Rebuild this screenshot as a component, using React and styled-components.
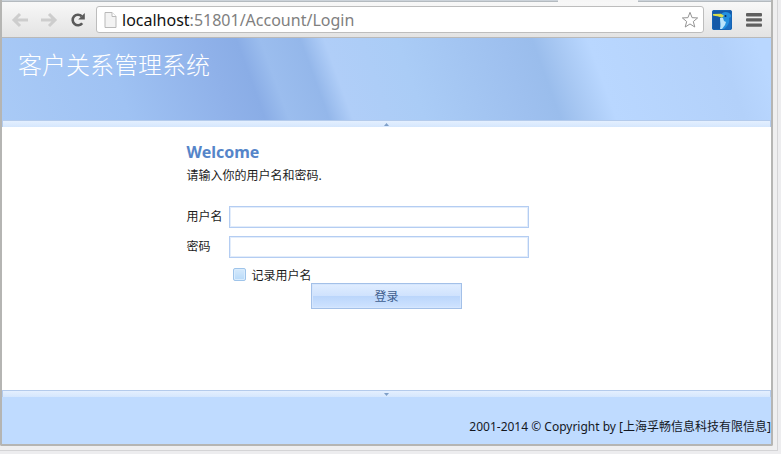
import React from "react";
import styled, { createGlobalStyle } from "styled-components";

const GlobalStyle = createGlobalStyle`
  *, *::before, *::after { box-sizing: border-box; }
  body {
    margin: 0;
    background: #ededef;
    font-family: "Noto Sans", "Noto Sans CJK SC", sans-serif;
    font-size: 12px;
    color: #1c1c1c;
  }
`;

const Desktop = styled.div`
  min-height: 100vh;
  padding: 0 3px 3px 0;
  display: flex;
`;

const Backdrop = styled.div`
  flex: 1;
  display: flex;
  padding: 0 4px 4px 0;
  background: #efeff0;
  border: solid #d4d4d6;
  border-width: 0 1px 1px 0;
`;

const BrowserWindow = styled.div`
  flex: 1;
  min-width: 0;
  display: flex;
  flex-direction: column;
  border: solid #b5b5b3;
  border-width: 0 2px 2px;
  border-radius: 0 0 2px 2px;
  background: #fff;
`;

const TabStrip = styled.div`
  display: flex;
  height: 2px;
  background: #ccd3da;
  border-bottom: 1px solid #b4babf;
`;

const ActiveTab = styled.div`
  width: 80px;
  height: 2px;
  margin-left: auto;
  margin-right: 133px;
  background: #f6f6f6;
`;

const Toolbar = styled.nav`
  display: flex;
  align-items: center;
  height: 36px;
  padding: 0 0 0 8px;
  background: linear-gradient(#f8f8f8, #e3e3e3);
  border-bottom: 1px solid #b9b9b9;
`;

const ToolButton = styled.button`
  display: flex;
  align-items: center;
  justify-content: center;
  flex: none;
  width: ${(p) => p.$width}px;
  height: 26px;
  padding: 0;
  border: 0;
  background: none;
`;

const AddressBar = styled.div`
  flex: 1;
  min-width: 0;
  display: flex;
  align-items: center;
  height: 27px;
  margin: 0 3px 0 8px;
  padding: 0 4px 0 7px;
  gap: 5px;
  background: #fff;
  border: 1px solid #bdbdbd;
  border-radius: 3px;
`;

const Address = styled.div`
  flex: 1;
  min-width: 0;
  overflow: hidden;
  white-space: nowrap;
  font-family: "Noto Sans", sans-serif;
  font-size: 16px;
  line-height: 24px;
  color: #808080;
`;

const Host = styled.span`
  color: #111;
`;

const Banner = styled.header`
  height: 82px;
  padding: 9px 16px;
  background:
    linear-gradient(70deg,
      #a9caf6 0%, #9fc2f3 16%, #8fb1e9 29%, #8aade6 33%,
      #9bbdee 36%, #94b7ea 41%, #b0cef8 44%, #aaccf6 53%,
      #9ec0ef 66%, #9abdec 70%, #a8c8f3 73%, #b9d7ff 77%,
      #b3d1fa 93%, #b9d7ff 98%);
`;

const SiteTitle = styled.h1`
  margin: 0;
  font-family: "Noto Sans CJK SC", sans-serif;
  font-size: 24px;
  line-height: 34px;
  font-weight: 300;
  color: #fff;
`;

const Splitter = styled.div`
  display: flex;
  align-items: center;
  justify-content: center;
  height: 7px;
  background: linear-gradient(#e4f0ff, #d5e7fd);
  border: 1px solid #b4cbec;
  border-bottom: 0;
`;

const Main = styled.main`
  flex: 1;
  padding: 13px 0;
`;

const LoginForm = styled.form`
  display: flex;
  flex-direction: column;
  width: 400px;
  max-width: 100%;
  margin: 0 auto;
`;

const Heading = styled.h2`
  margin: 0;
  font-size: 16px;
  line-height: 24px;
  font-weight: 700;
  color: #5585c9;
`;

const Hint = styled.p`
  margin: 0 0 18px;
  line-height: 24px;
`;

const Field = styled.div`
  display: flex;
  align-items: center;
  margin-bottom: 8px;
`;

const FieldLabel = styled.label`
  width: 42px;
  line-height: 22px;
`;

const TextInput = styled.input`
  width: 300px;
  height: 22px;
  padding: 0 4px;
  font: inherit;
  background: #fff;
  border: 1px solid #b4cdf2;
  border-radius: 0;
  outline: none;
  box-shadow: inset 0 0 0 1px #e3edfb;
`;

const Remember = styled.label`
  display: flex;
  align-items: center;
  gap: 6px;
  height: 17px;
  margin-left: 46px;
`;

const Checkbox = styled.input`
  appearance: none;
  width: 13px;
  height: 13px;
  margin: 0;
  border: 1px solid #9fc4ea;
  border-radius: 2px;
  background: linear-gradient(#d6eafc, #b8daf9);
  box-shadow: inset 0 0 0 1px #d9ecfd;

  &:checked {
    background: #5585c9;
  }
`;

const SubmitButton = styled.button`
  align-self: center;
  width: 151px;
  height: 26px;
  padding: 0 0 1px;
  font: inherit;
  color: #3f5f8f;
  background: linear-gradient(#e0edff 0%, #cfe2fd 50%, #bbd6fb 52%, #cfe3ff 100%);
  border: 1px solid #a3c0e8;
  box-shadow: inset 0 0 0 1px #d5e6fd;
`;

const Footer = styled.footer`
  height: 47px;
  padding-top: 20px;
  background: #bfdbff;
  text-align: right;
  line-height: 20px;
  white-space: nowrap;
  color: #14181f;
`;

const BackIcon = () => (
  <svg width="18" height="16" viewBox="0 0 18 16" fill="none" stroke="#cdcdcd" strokeWidth="3">
    <path d="M9 2 3 8l6 6M3 8h14" />
  </svg>
);

const ForwardIcon = () => (
  <svg width="18" height="16" viewBox="0 0 18 16" fill="none" stroke="#cdcdcd" strokeWidth="3">
    <path d="m9 2 6 6-6 6M15 8H1" />
  </svg>
);

const ReloadIcon = () => (
  <svg width="16" height="16" viewBox="0 0 16 16">
    <path d="M12.2 11.2A5.3 5.3 0 1 1 11.7 4.2" fill="none" stroke="#5a5a5a" strokeWidth="2.6" />
    <path d="M14.8 1v6.6H8.2z" fill="#5a5a5a" />
  </svg>
);

const PageIcon = () => (
  <svg width="13" height="16" viewBox="0 0 13 16" fill="#f3f3f3" stroke="#b9b9b9">
    <path d="M1 .5h7l4 4v11H1z" />
    <path d="M8 .5v4h4" fill="#fff" />
  </svg>
);

const StarIcon = () => (
  <svg width="20" height="20" viewBox="0 0 20 20" fill="#fff" stroke="#929292" strokeWidth="1.1" strokeLinejoin="round">
    <path d="m10 1.5 2.3 5.9 6.2.3-4.8 4 1.6 6.1-5.3-3.4-5.3 3.4 1.6-6.1-4.8-4 6.2-.3z" />
  </svg>
);

const BirdIcon = () => (
  <svg width="20" height="20" viewBox="0 0 20 20">
    <rect width="20" height="20" rx="2" fill="#1459a8" />
    <path d="M9 5c1-4 8-4 10 0v15H8c1-5 0-9 1-15z" fill="#2390df" />
    <path d="M8 8h3l1 3 2 1-1 3-3 4H8c1-4 0-7 0-11z" fill="#b9e4fb" />
    <path d="M1 4l8-.2 3 2-2 2C7 6.5 4 6 1 5.5z" fill="#d9dc4c" />
    <path d="M17 8c1 4-1 8-5 11h7V7z" fill="#1a6dc2" />
    <circle cx="13.5" cy="6" r="1" fill="#0b2c5c" />
    <rect x=".5" y=".5" width="19" height="19" rx="2" fill="none" stroke="#1765b5" />
  </svg>
);

const MenuIcon = () => (
  <svg width="16" height="14" viewBox="0 0 16 14" fill="#606060">
    <rect width="16" height="3.4" rx="1" />
    <rect y="5.2" width="16" height="3.4" rx="1" />
    <rect y="10.4" width="16" height="3.4" rx="1" />
  </svg>
);

const Arrow = ({ down }) => (
  <svg width="5" height="3" viewBox="0 0 5 3" fill="#7e9fc8">
    <path d={down ? "M0 0h5L2.5 3z" : "M0 3h5L2.5 0z"} />
  </svg>
);

export default function App() {
  return (
    <>
      <GlobalStyle />
      <Desktop>
        <Backdrop>
          <BrowserWindow>
            <TabStrip>
              <ActiveTab />
            </TabStrip>
            <Toolbar aria-label="Browser">
              <ToolButton $width={20} aria-label="Back"><BackIcon /></ToolButton>
              <ToolButton $width={38} aria-label="Forward"><ForwardIcon /></ToolButton>
              <ToolButton $width={20} aria-label="Reload"><ReloadIcon /></ToolButton>
              <AddressBar>
                <PageIcon />
                <Address><Host>localhost</Host>:51801/Account/Login</Address>
                <ToolButton $width={18} aria-label="Bookmark"><StarIcon /></ToolButton>
              </AddressBar>
              <ToolButton $width={30} aria-label="Extension"><BirdIcon /></ToolButton>
              <ToolButton $width={34} aria-label="Menu"><MenuIcon /></ToolButton>
            </Toolbar>
            <Banner>
              <SiteTitle>客户关系管理系统</SiteTitle>
            </Banner>
            <Splitter><Arrow /></Splitter>
            <Main>
              <LoginForm onSubmit={(e) => e.preventDefault()}>
                <Heading>Welcome</Heading>
                <Hint>请输入你的用户名和密码.</Hint>
                <Field>
                  <FieldLabel htmlFor="username">用户名</FieldLabel>
                  <TextInput id="username" type="text" />
                </Field>
                <Field>
                  <FieldLabel htmlFor="password">密码</FieldLabel>
                  <TextInput id="password" type="password" />
                </Field>
                <Remember>
                  <Checkbox type="checkbox" />
                  记录用户名
                </Remember>
                <SubmitButton type="submit">登录</SubmitButton>
              </LoginForm>
            </Main>
            <Splitter><Arrow down /></Splitter>
            <Footer>2001-2014 © Copyright by [上海孚畅信息科技有限信息]</Footer>
          </BrowserWindow>
        </Backdrop>
      </Desktop>
    </>
  );
}
